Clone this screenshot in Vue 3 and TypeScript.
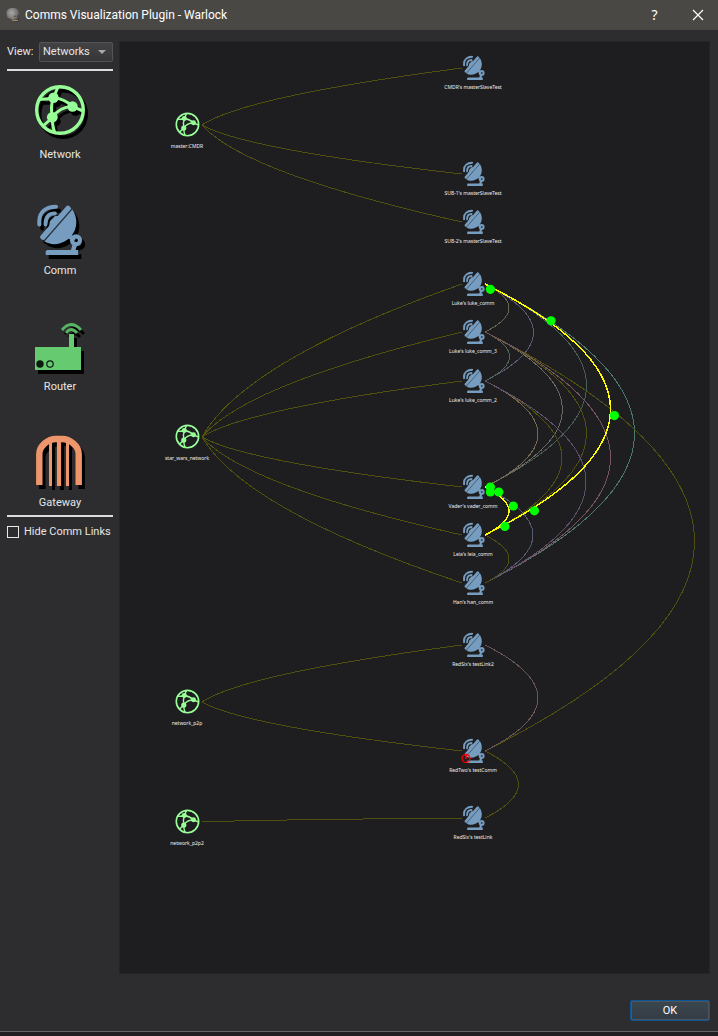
<script setup lang="ts">
import { ref } from 'vue'

interface GraphNode {
  name: string
  y: number
}

interface Link {
  from: number
  to: number
  color: string
}

interface Dot {
  x: number
  y: number
}

const NETWORK_X = 187
const COMM_X = 473
const NETWORK_PORT = 202
const COMM_IN = 462
const COMM_OUT = 485
const OLIVE = '#50500f'

const view = ref('Networks')
const hideLinks = ref(false)

const networks: GraphNode[] = [
  { name: 'master:CMDR', y: 125 },
  { name: 'star_wars_network', y: 437 },
  { name: 'network_p2p', y: 702 },
  { name: 'network_p2p2', y: 822 },
]

const comms: GraphNode[] = [
  { name: "CMDR's masterSlaveTest", y: 68 },
  { name: "SUB-1's masterSlaveTest", y: 174 },
  { name: "SUB-2's masterSlaveTest", y: 222 },
  { name: "Luke's luke_comm", y: 284 },
  { name: "Luke's luke_comm_3", y: 332 },
  { name: "Luke's luke_comm_2", y: 381 },
  { name: "Vader's vader_comm", y: 487 },
  { name: "Leia's leia_comm", y: 535 },
  { name: "Han's han_comm", y: 583 },
  { name: "RedSix's testLink2", y: 645 },
  { name: "RedTwo's testComm", y: 751 },
  { name: "RedSix's testLink", y: 818 },
]

// Pairs of [network y, comm y]
const memberships: [number, number][] = [
  [125, 68], [125, 174], [125, 222],
  [437, 284], [437, 332], [437, 381], [437, 487], [437, 535], [437, 583],
  [702, 645], [702, 751],
  [822, 818],
]

const links: Link[] = [
  { from: 284, to: 332, color: '#66664f' },
  { from: 284, to: 381, color: '#575c74' },
  { from: 284, to: 487, color: '#4a5f58' },
  { from: 284, to: 583, color: '#4c7a6c' },
  { from: 332, to: 381, color: '#50645a' },
  { from: 332, to: 487, color: '#6a6a62' },
  { from: 332, to: 535, color: OLIVE },
  { from: 332, to: 751, color: OLIVE },
  { from: 332, to: 583, color: '#79565e' },
  { from: 381, to: 535, color: OLIVE },
  { from: 381, to: 487, color: '#766a50' },
  { from: 381, to: 583, color: '#61506b' },
  { from: 487, to: 583, color: '#565c74' },
  { from: 535, to: 583, color: OLIVE },
  { from: 645, to: 751, color: '#6b5753' },
  { from: 751, to: 818, color: OLIVE },
]

const activeLinks: Link[] = [
  { from: 284, to: 535, color: '#ffff00' },
  { from: 487, to: 535, color: '#ffff00' },
]

const dots: Dot[] = [
  { x: 490.4, y: 289.3 }, { x: 551, y: 320.8 }, { x: 614.4, y: 415.6 },
  { x: 490.4, y: 487 }, { x: 490.4, y: 492 }, { x: 498.8, y: 492 },
  { x: 513.3, y: 506 }, { x: 534.4, y: 510.8 }, { x: 504.9, y: 526.4 },
]

function memberPath([a, b]: [number, number]): string {
  return `M${NETWORK_PORT} ${a}Q${NETWORK_PORT + 43} ${(a + b) / 2} ${COMM_IN} ${b}`
}

function linkPath(link: Link): string {
  const reach = link.to - link.from
  return `M${COMM_OUT} ${link.from}Q${COMM_OUT + reach} ${(link.from + link.to) / 2} ${COMM_OUT} ${link.to}`
}
</script>

<template>
  <div class="window">
    <header class="titlebar">
      <svg class="app-icon" width="14" height="16" viewBox="0 0 14 16" aria-hidden="true">
        <defs>
          <radialGradient id="skull" cx="0.4" cy="0.35" r="0.7">
            <stop offset="0" stop-color="#a9a9a9" />
            <stop offset="0.6" stop-color="#777573" />
            <stop offset="1" stop-color="#393634" />
          </radialGradient>
        </defs>
        <path d="M0.500 6.500C0.500 2.500 3 1 7 1S13.500 3 13.500 7V11L12.500 15H7L5 12 1.500 10.500Z" fill="url(#skull)" />
        <path d="M6.500 13.500H12M7 11L9 10" stroke="#a48c68" fill="none" />
        <path d="M8 9.500L9.500 9M11 9L12.500 9" stroke="#35322f" fill="none" />
      </svg>
      <h1>Comms Visualization Plugin - Warlock</h1>
      <button class="caption" type="button" aria-label="Help">?</button>
      <button class="caption" type="button" aria-label="Close">
        <svg width="12" height="12" viewBox="0 0 12 12"><path d="M1 1L11 11M11 1L1 11" stroke="#fff" stroke-width="1.200" /></svg>
      </button>
    </header>

    <svg class="defs" width="0" height="0" aria-hidden="true">
      <defs>
        <g id="network" fill="none" stroke="#98ff98" stroke-width="3">
          <circle cx="30" cy="26" r="23.300" stroke-width="3.400" />
          <path d="M8 15Q16 16 23.500 13.500L28 3M23.500 13.500Q35 15 42.500 22.500L53 27M23.500 13.500Q20 23 22.500 33.500M22.500 33.500Q29 23 42.500 22.500M22.500 33.500L13 42M22.500 33.500Q22 42 25 49" />
          <g fill="#98ff98" stroke="none">
            <circle cx="23.500" cy="13.700" r="5.200" />
            <circle cx="42.500" cy="22.500" r="5.200" />
            <circle cx="22.300" cy="33.300" r="5.400" />
          </g>
        </g>
        <g id="dish" fill="none" stroke="#769dbf" stroke-linecap="round">
          <path d="M9.300 24.500V21C9.300 12 16 6.700 26 6.700" stroke-width="4" />
          <path d="M15.500 24.500C15.500 17 19 13.300 25 13.300" stroke-width="3.800" />
          <path d="M42 9C48 17 48 29 40.500 37C33 44.500 22 46.500 14 41L12 36 19 27 20 21 25 16 29 16 37 7Z" fill="#769dbf" stroke="none" />
          <path d="M13 37L38 8.500" stroke-width="5.500" />
          <path d="M41.500 9.500L14.500 40.500" stroke="#26323d" stroke-width="1.200" />
          <path d="M39 36L43 39M45 44L43 51" stroke-width="4.500" />
          <circle cx="46" cy="40.300" r="4" stroke-width="4.200" />
          <path d="M17 50H48.300V55H15.700V51.500Z" fill="#769dbf" stroke="none" />
        </g>
      </defs>
    </svg>

    <main class="body">
      <aside class="sidebar">
        <div class="view-row">
          <label for="view">View:</label>
          <span class="select-box">
            <select id="view" v-model="view">
              <option>Networks</option>
              <option>Platforms</option>
            </select>
          </span>
        </div>
        <ul class="legend">
          <li>
            <svg class="legend-icon" viewBox="0 0 60 60" aria-hidden="true"><use href="#network" /></svg>
            <span>Network</span>
          </li>
          <li>
            <svg class="legend-icon" viewBox="0 0 60 60" aria-hidden="true"><use href="#dish" /></svg>
            <span>Comm</span>
          </li>
          <li>
            <svg class="legend-icon" viewBox="0 0 60 60" aria-hidden="true">
              <path d="M5 31H39V18H44V31H51V54H5Z" fill="#66cb70" />
              <path d="M32 14Q41 3 51 14M36 17Q41 10 47 17" fill="none" stroke="#57b562" stroke-width="2.800" />
              <circle cx="10" cy="48" r="3.700" fill="#0b1a0c" />
              <circle cx="20" cy="48" r="3.200" fill="none" stroke="#0b1a0c" stroke-width="1.200" />
            </svg>
            <span>Router</span>
          </li>
          <li>
            <svg class="legend-icon" viewBox="0 0 60 60" aria-hidden="true">
              <g fill="none" stroke="#ee966b">
                <path d="M9.300 53V22C9.300 14 18 7 26 7H32C40 7 48.700 14 48.700 22V53" stroke-width="6.400" />
                <path d="M20.500 54V10M37.500 54V10" stroke-width="3" />
                <path d="M29 54V6" stroke-width="4.200" />
              </g>
            </svg>
            <span>Gateway</span>
          </li>
        </ul>
        <label class="hide-links">
          <input v-model="hideLinks" type="checkbox" />
          <span>Hide Comm Links</span>
        </label>
      </aside>

      <section class="canvas" aria-label="Communication graph">
        <svg class="graph">
          <g transform="translate(-120 -42)">
            <g class="links">
              <path v-for="(m, i) in memberships" :key="'m' + i" :d="memberPath(m)" :stroke="OLIVE" />
              <template v-if="!hideLinks">
                <path v-for="(l, i) in links" :key="'l' + i" :d="linkPath(l)" :stroke="l.color" />
                <path v-for="(l, i) in activeLinks" :key="'a' + i" class="active" :d="linkPath(l)" :stroke="l.color" />
              </template>
            </g>
            <g v-for="n in networks" :key="n.name">
              <use href="#network" :transform="`translate(${NETWORK_X} ${n.y}) scale(0.48) translate(-29 -27)`" />
              <text :x="NETWORK_X" :y="n.y + 23">{{ n.name }}</text>
            </g>
            <g v-for="c in comms" :key="c.name">
              <use href="#dish" :transform="`translate(${COMM_X + 1} ${c.y}) scale(0.48) translate(-30 -30)`" />
              <text :x="COMM_X" :y="c.y + 21">{{ c.name }}</text>
            </g>
            <circle v-for="(d, i) in dots" :key="'d' + i" :cx="d.x" :cy="d.y" r="4.600" fill="#00ff00" />
            <path d="M466 754V759" stroke="#ff0000" stroke-width="1.600" />
            <circle cx="466" cy="758.500" r="4" fill="none" stroke="#ff0000" stroke-width="1.300" />
          </g>
        </svg>
      </section>
    </main>

    <footer class="actions">
      <button class="ok" type="button">OK</button>
    </footer>
    <div class="edge"></div>
  </div>
</template>

<style>
body {
  margin: 0;
  background: #2d2d2f;
}
</style>

<style scoped>
.window {
  display: flex;
  flex-direction: column;
  min-height: 100vh;
  background: #2d2d2f;
  color: #e6e6e6;
  font: 11px/16px Roboto, "Liberation Sans", sans-serif;
}
.titlebar {
  display: flex;
  align-items: center;
  height: 30px;
  padding-left: 6px;
  background: #4a4845;
  color: #fff;
}
h1 {
  flex: 1;
  margin: 0 0 0 5px;
  font-size: 12px;
  font-weight: 400;
}
.caption {
  display: flex;
  align-items: center;
  justify-content: center;
  width: 45px;
  height: 30px;
  padding: 0;
  border: 0;
  background: none;
  color: #fff;
  font: 14px/20px "Noto Sans", sans-serif;
}
.caption:last-child {
  width: 41px;
}
.defs {
  display: block;
}
.body {
  display: flex;
  flex: 1;
  gap: 6px;
  padding: 11px 8px 0 7px;
}
.sidebar {
  flex: none;
  width: 106px;
}
.view-row {
  display: grid;
  grid-template-columns: 26px 1fr;
  align-items: center;
  gap: 6px;
  height: 22px;
}
.select-box {
  position: relative;
  display: flex;
}
.select-box::after {
  content: "";
  position: absolute;
  right: 7px;
  top: 8px;
  border: 4px solid transparent;
  border-top-color: #a8a8a8;
  border-bottom: 0;
}
select {
  appearance: none;
  width: 100%;
  height: 20px;
  padding: 0 0 0 3px;
  border: 1px solid #545456;
  border-radius: 2px;
  background: linear-gradient(#434345, #363638);
  color: #e6e6e6;
  font: inherit;
}
.legend {
  display: flex;
  flex-direction: column;
  gap: 37px;
  margin: 6px 0 0;
  padding: 13px 0 4px;
  border: solid #dcdcdc;
  border-width: 2px 0;
  list-style: none;
}
.legend li {
  display: flex;
  flex-direction: column;
  align-items: center;
  gap: 3px;
}
.legend-icon {
  width: 60px;
  height: 60px;
  overflow: visible;
  filter: drop-shadow(3px 4px 0 #000);
}
.hide-links {
  display: flex;
  align-items: center;
  gap: 5px;
  margin-top: 7px;
  white-space: nowrap;
}
input {
  appearance: none;
  flex: none;
  width: 12px;
  height: 12px;
  margin: 0;
  border: 1px solid #e8e8e8;
}
input:checked {
  background: #98b8d8;
}
.canvas {
  position: relative;
  flex: 1;
  min-width: 0;
  border: 1px solid #252527;
  background: #1e1e20;
}
.graph {
  position: absolute;
  inset: 0;
  width: 100%;
  height: 100%;
}
.links {
  fill: none;
  shape-rendering: crispEdges;
}
.links .active {
  stroke-width: 1.5;
}
text {
  fill: #f0f0f0;
  font: 5px "Noto Sans", sans-serif;
  text-anchor: middle;
}
.actions {
  display: flex;
  justify-content: flex-end;
  padding: 26px 8px 10px;
}
.ok {
  width: 80px;
  height: 21px;
  padding: 0;
  border: 1px solid #0b5699;
  border-radius: 2px;
  background: linear-gradient(#3c464f, #343c44);
  box-shadow: inset 0 0 0 1px #4a5560;
  color: #fff;
  font: inherit;
}
.edge {
  height: 4px;
  border-top: 1px solid #646464;
  background: #211f21;
}
</style>
